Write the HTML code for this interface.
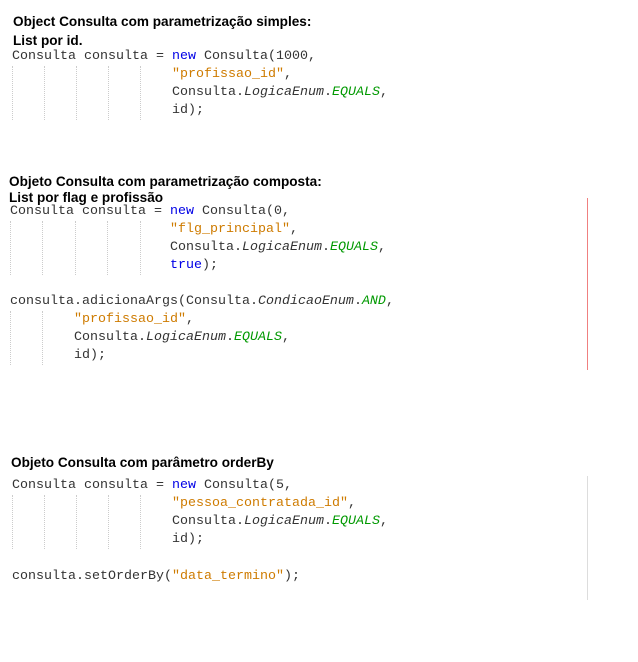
<!DOCTYPE html>
<html><head><meta charset="utf-8"><style>
body{margin:0;width:638px;height:662px;background:#fff;position:relative;overflow:hidden}
.h{position:absolute;font:bold 13.6px "Liberation Sans",sans-serif;color:#000;white-space:pre;line-height:16px;letter-spacing:0}
.c{position:absolute;font:13.33px "Liberation Mono",monospace;color:#333;white-space:pre;line-height:18px}
.k{color:#0000e6}.s{color:#ce7b00}.e{color:#009900;font-style:italic}.i{font-style:italic}
.g{position:absolute;width:0;border-left:1px dotted #ccc}
.v{position:absolute;width:1px}
</style></head><body>
<div class="h" style="left:13px;top:14px">Object Consulta com parametrização simples:</div>
<div class="h" style="left:13px;top:33px">List por id.</div>
<div class="c" style="left:12px;top:48px">Consulta consulta = <span class="k">new</span> Consulta(1000,</div>
<div class="c" style="left:172px;top:66px"><span class="s">"profissao_id"</span>,</div>
<div class="c" style="left:172px;top:84px">Consulta.<span class="i">LogicaEnum</span>.<span class="e">EQUALS</span>,</div>
<div class="c" style="left:172px;top:102px">id);</div>
<div class="g" style="left:12px;top:66px;height:54px"></div>
<div class="g" style="left:44px;top:66px;height:54px"></div>
<div class="g" style="left:76px;top:66px;height:54px"></div>
<div class="g" style="left:108px;top:66px;height:54px"></div>
<div class="g" style="left:140px;top:66px;height:54px"></div>

<div class="h" style="left:9px;top:174px">Objeto Consulta com parametrização composta:</div>
<div class="h" style="left:9px;top:190px">List por flag e profissão</div>
<div class="c" style="left:10px;top:203px">Consulta consulta = <span class="k">new</span> Consulta(0,</div>
<div class="c" style="left:170px;top:221px"><span class="s">"flg_principal"</span>,</div>
<div class="c" style="left:170px;top:239px">Consulta.<span class="i">LogicaEnum</span>.<span class="e">EQUALS</span>,</div>
<div class="c" style="left:170px;top:257px"><span class="k">true</span>);</div>
<div class="c" style="left:10px;top:293px">consulta.adicionaArgs(Consulta.<span class="i">CondicaoEnum</span>.<span class="e">AND</span>,</div>
<div class="c" style="left:74px;top:311px"><span class="s">"profissao_id"</span>,</div>
<div class="c" style="left:74px;top:329px">Consulta.<span class="i">LogicaEnum</span>.<span class="e">EQUALS</span>,</div>
<div class="c" style="left:74px;top:347px">id);</div>
<div class="g" style="left:10px;top:221px;height:54px"></div>
<div class="g" style="left:42px;top:221px;height:54px"></div>
<div class="g" style="left:75px;top:221px;height:54px"></div>
<div class="g" style="left:107px;top:221px;height:54px"></div>
<div class="g" style="left:140px;top:221px;height:54px"></div>
<div class="g" style="left:10px;top:311px;height:54px"></div>
<div class="g" style="left:42px;top:311px;height:54px"></div>
<div class="v" style="left:587px;top:198px;height:172px;background:#f08080"></div>

<div class="h" style="left:11px;top:455px">Objeto Consulta com parâmetro orderBy</div>
<div class="c" style="left:12px;top:477px">Consulta consulta = <span class="k">new</span> Consulta(5,</div>
<div class="c" style="left:172px;top:495px"><span class="s">"pessoa_contratada_id"</span>,</div>
<div class="c" style="left:172px;top:513px">Consulta.<span class="i">LogicaEnum</span>.<span class="e">EQUALS</span>,</div>
<div class="c" style="left:172px;top:531px">id);</div>
<div class="c" style="left:12px;top:568px">consulta.setOrderBy(<span class="s">"data_termino"</span>);</div>
<div class="g" style="left:12px;top:495px;height:54px"></div>
<div class="g" style="left:44px;top:495px;height:54px"></div>
<div class="g" style="left:76px;top:495px;height:54px"></div>
<div class="g" style="left:108px;top:495px;height:54px"></div>
<div class="g" style="left:140px;top:495px;height:54px"></div>
<div class="v" style="left:587px;top:476px;height:124px;background:#ddd"></div>
</body></html>
